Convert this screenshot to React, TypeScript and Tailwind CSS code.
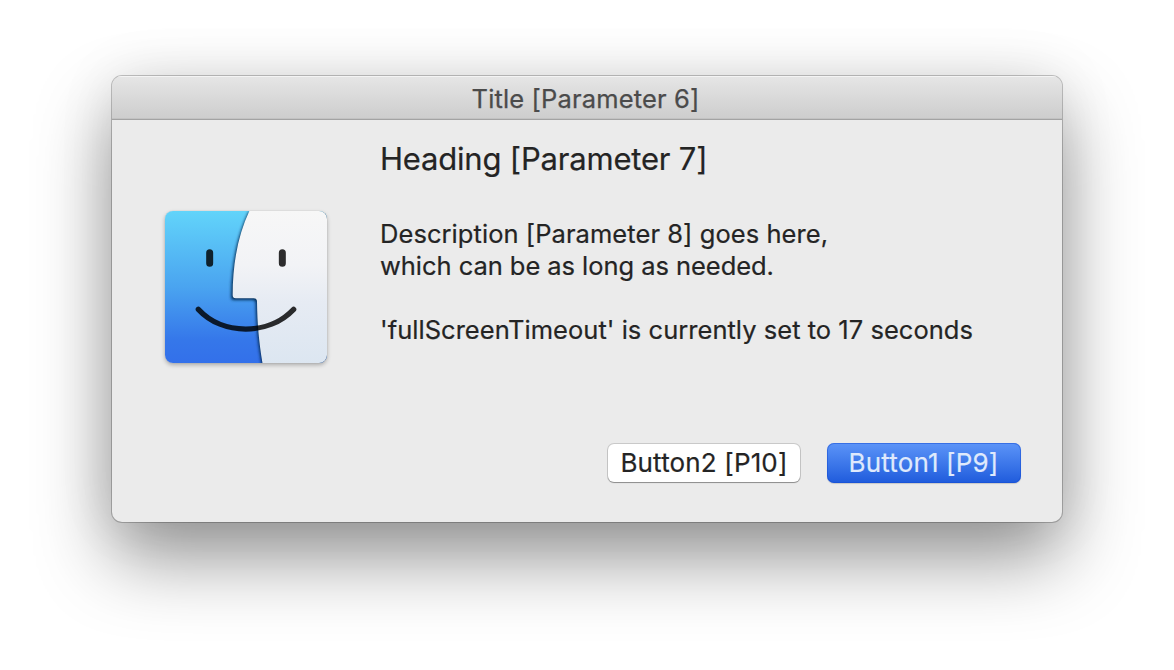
function FinderIcon() {
  return (
    <svg
      viewBox="0 0 486 456"
      className="block h-[152px] w-[162px] rounded-[8px] shadow-[0_2px_4px_rgba(0,0,0,0.28),0_0_1px_rgba(0,0,0,0.2)]"
      aria-label="Finder"
    >
      <defs>
        <linearGradient id="blue" x1="0" y1="0" x2="0" y2="1">
          <stop offset="0" stopColor="#62d4fa" />
          <stop offset="0.5" stopColor="#4aa4f0" />
          <stop offset="0.85" stopColor="#3577ea" />
          <stop offset="1" stopColor="#3370ea" />
        </linearGradient>
        <linearGradient id="white" x1="0" y1="0" x2="0" y2="1">
          <stop offset="0" stopColor="#f7f7f7" />
          <stop offset="0.35" stopColor="#f2f3f6" />
          <stop offset="0.6" stopColor="#e6ebf3" />
          <stop offset="1" stopColor="#dce6f1" />
        </linearGradient>
        <filter id="soft" x="-20%" y="-20%" width="140%" height="140%">
          <feGaussianBlur stdDeviation="4" />
        </filter>
      </defs>
      <rect width="486" height="456" fill="url(#blue)" />
      <path
        d="M254 -2C221 67 202 152 201 253q0 10 10 10h54q10 0 10 10C276 342 282 392 293 460H500V-2Z"
        fill="#06264f"
        fillOpacity="0.95"
        filter="url(#soft)"
        transform="translate(-3 4)"
      />
      <path
        d="M254 -2C221 67 203 152 203 253q0 9 9 9h54q10 0 10 10C277 342 282 392 293 460H500V-2Z"
        fill="url(#white)"
      />
      <g stroke="#000" strokeOpacity="0.82" strokeLinecap="round" fill="none">
        <path d="M134 125v32M352 125v32" strokeWidth="21" />
        <path d="M100 295C173 374 311 374 386 295" strokeWidth="16" />
      </g>
    </svg>
  );
}

export default function App() {
  return (
    <div className="flex h-[670px] w-[1174px] items-start justify-center overflow-hidden bg-white pt-[76px] font-['Inter',sans-serif]">
      <main className="flex h-[446px] w-[950px] flex-col overflow-hidden rounded-[10px] bg-[#ebebeb] shadow-[0_0_0_1px_rgba(0,0,0,0.22),0_0_60px_rgba(0,0,0,0.08),0_36px_76px_rgba(0,0,0,0.42)]">
        <header className="flex h-11 shrink-0 items-center justify-center border-b border-[#a3a3a3] bg-linear-to-b from-[#e6e6e6] to-[#cdcdcd] pt-[2px] pr-[3px] shadow-[inset_0_1px_0_#f4f4f4,inset_0_-1px_0_#c2c2c2]">
          <h1 className="text-[25.5px] leading-8 tracking-[0.15px] whitespace-nowrap text-[#4b4b4b] [-webkit-text-stroke:0.25px_currentColor]">Title [Parameter 6]</h1>
        </header>
        <section className="flex pl-[53px]">
          <div className="w-[215px] shrink-0 pt-[91px]">
            <FinderIcon />
          </div>
          <div className="text-[25.5px] leading-8 whitespace-nowrap text-[#242424] [-webkit-text-stroke:0.2px_currentColor]">
            <h2 className="pt-[19px] text-[31px] leading-10 tracking-[-0.19px]">Heading [Parameter 7]</h2>
            <p className="mt-[39px] tracking-[0.06px]">Description [Parameter 8] goes here,</p>
            <p className="tracking-[-0.05px]">which can be as long as needed.</p>
            <p className="mt-8 tracking-[0.03px]">'fullScreenTimeout' is currently set to 17 seconds</p>
          </div>
        </section>
        <footer className="mt-auto flex items-start justify-end gap-[27px] pr-[41px] pb-[39px] text-[26px] leading-8 tracking-[0.15px] [-webkit-text-stroke:0.2px_currentColor]">
          <button className="mt-px flex h-[38px] w-[192px] items-center justify-center rounded-[6px] bg-white whitespace-nowrap text-[#242424] shadow-[0_0_0_1px_rgba(0,0,0,0.14),0_1px_1px_rgba(0,0,0,0.3)]">
            Button2 [P10]
          </button>
          <button className="flex h-[40px] w-[194px] items-center justify-center rounded-[7px] bg-linear-to-b from-[#5c94f8] to-[#1f5bdc] pr-[1px] whitespace-nowrap text-[#dfe9fc] shadow-[inset_0_0_0_1px_rgba(20,75,210,0.5),0_1px_1px_rgba(0,0,0,0.15)]">
            Button1 [P9]
          </button>
        </footer>
      </main>
    </div>
  );
}
